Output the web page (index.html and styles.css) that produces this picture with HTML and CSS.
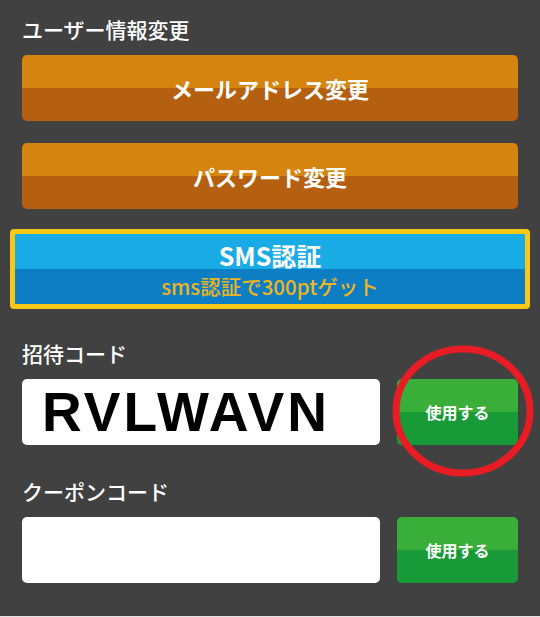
FILE: index.html
```html
<!DOCTYPE html>
<html lang="ja">
<head>
<meta charset="utf-8">
<link rel="stylesheet" href="styles.css">
</head>
<body>
<div class="page">
  <h2 class="heading">ユーザー情報変更</h2>
  <button class="btn orange">メールアドレス変更</button>
  <button class="btn orange second">パスワード変更</button>
  <div class="sms">
    <div class="sms-top">SMS認証</div>
    <div class="sms-bottom">sms認証で300ptゲット</div>
  </div>
  <div class="label first-label">招待コード</div>
  <div class="row">
    <div class="input code">RVLWAVN</div>
    <button class="use">使用する</button>
    <svg class="circle" width="144" height="134" viewBox="0 0 144 134">
      <ellipse cx="71" cy="66" rx="67" ry="62" fill="none" stroke="#e81c24" stroke-width="7"/>
    </svg>
  </div>
  <div class="label second-label">クーポンコード</div>
  <div class="row">
    <div class="input"></div>
    <button class="use">使用する</button>
  </div>
</div>
</body>
</html>
```
FILE: styles.css
```css
html { background: #e4e4e4; }
body { margin: 0; }
.page {
  background: #414141;
  height: 616px;
  padding: 14px 22px 0;
  box-sizing: border-box;
  font-family: "Noto Sans CJK JP", "Noto Sans", sans-serif;
  color: #fff;
  display: flex;
  flex-direction: column;
}
.heading, .label {
  margin: 0;
  font-size: 21px;
  font-weight: 500;
  line-height: 30px;
  height: 30px;
}
.btn {
  display: block;
  width: 100%;
  height: 66px;
  border: 0;
  border-radius: 5px;
  margin-top: 11px;
  font-family: inherit;
  font-size: 22px;
  font-weight: 700;
  color: #fff;
  padding: 0;
}
.orange { background: linear-gradient(#d5840f 0, #d5840f 50%, #b56011 50%, #b56011 100%); }
.btn.second { margin-top: 22px; }
.sms {
  margin: 20px -12px 0;
  border: 5px solid #f7c816;
  border-radius: 4px;
  height: 80px;
  box-sizing: border-box;
  display: flex;
  flex-direction: column;
  text-align: center;
}
.sms-top {
  height: 35px;
  background: #19abe6;
  font-size: 25px;
  font-weight: 700;
  line-height: 42px;
}
.sms-bottom {
  flex: 1;
  background: #0d7ec3;
  color: #eeb520;
  font-size: 20.5px;
  font-weight: 500;
  line-height: 34px;
}
.first-label { margin-top: 29px; }
.second-label { margin-top: 31px; }
.row {
  position: relative;
  display: flex;
  gap: 17px;
  margin-top: 11px;
  height: 66px;
}
.input {
  width: 358px;
  background: #fff;
  border-radius: 5px;
}
.code {
  font-family: "Liberation Sans", Arial, sans-serif;
  font-weight: 700;
  font-size: 55px;
  letter-spacing: 3px;
  color: #000;
  line-height: 66px;
  padding-left: 20px;
  box-sizing: border-box;
}
.use {
  width: 121px;
  border: 0;
  border-radius: 5px;
  background: linear-gradient(#39ae38 0, #39ae38 50%, #199a39 50%, #199a39 100%);
  color: #fff;
  font-family: inherit;
  font-size: 16px;
  font-weight: 700;
  padding: 0;
}
.circle {
  position: absolute;
  left: 370px;
  top: -34px;
}
```
